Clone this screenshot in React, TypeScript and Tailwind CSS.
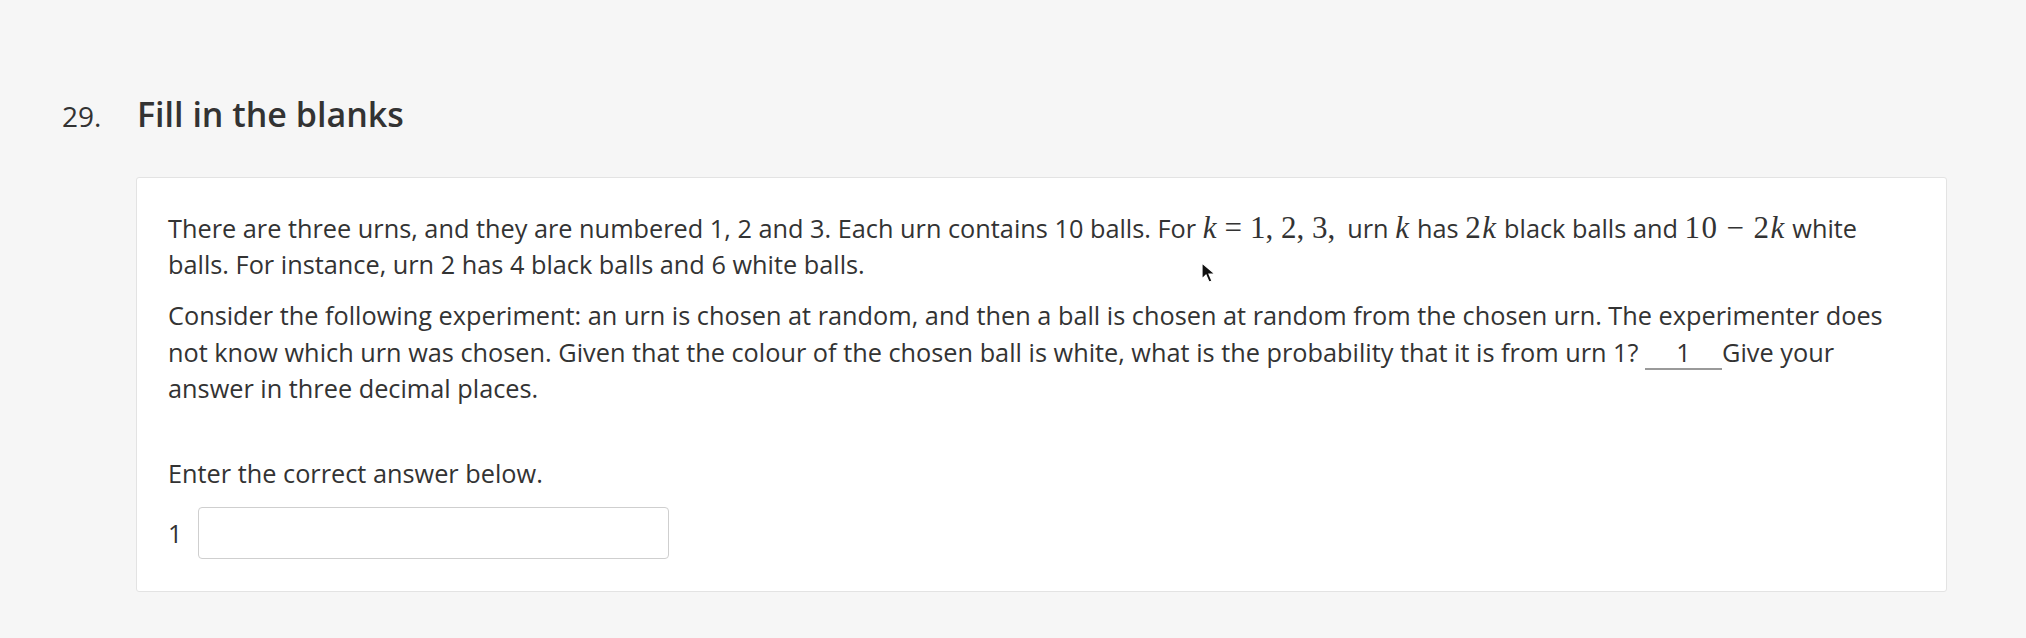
import React from 'react';

const sans = "font-['Open_Sans',_'Liberation_Sans',_sans-serif]";
const mathFont = "font-['Liberation_Serif',_'DejaVu_Serif',_serif] text-[31px] leading-none";

function M({ children, wide }: { children: React.ReactNode; wide?: boolean }) {
  return <span className={wide ? `${mathFont} tracking-[1.5px]` : mathFont}>{children}</span>;
}

function V({ children }: { children: React.ReactNode }) {
  return <i className="italic">{children}</i>;
}

export default function App() {
  return (
    <div className={`relative h-[638px] w-full overflow-hidden bg-[#f6f6f6] text-[#333] ${sans}`}>
      <div className="flex items-baseline pt-[94px] pl-[62px]">
        <span className="w-[75px] text-[28px] leading-[40px] text-[#333]">29.</span>
        <h2 className="text-[34px] leading-[40px] font-semibold text-[#333]">Fill in the blanks</h2>
      </div>

      <div className="mt-[41px] ml-[136px] w-[1811px] rounded-[3px] border border-[#e3e3e3] bg-white px-[31px] pt-[32px] pb-[32px]">
        <p className="text-[25.3px] leading-[36px]">
          There are three urns, and they are numbered 1, 2 and 3. Each urn contains 10 balls. For{' '}
          <M>
            <V>k</V>
            <span className="mx-[8px]">=</span>1, 2, 3,
          </M>
          <span className="ml-[12px]">urn</span> <M wide><V>k</V></M> has <M wide>2<V>k</V></M> black balls and{' '}
          <M wide>
            10<span className="mx-[8px]">−</span>2<V>k</V>
          </M>{' '}
          white balls. For instance, urn 2 has 4 black balls and 6 white balls.
        </p>
        <p className="mt-[15px] text-[25.3px] leading-[36.5px]">
          Consider the following experiment: an urn is chosen at random, and then a ball is chosen at random from
          the chosen urn. The experimenter does not know which urn was chosen. Given that the colour of the chosen
          ball is white, what is the probability that it is from urn 1?{' '}
          <span className="inline-block w-[77px] border-b-2 border-[#9a9a9a] text-center leading-[32px]">1</span>
          Give your answer in three decimal places.
        </p>

        <p className="mt-[48px] text-[25.3px] leading-[36px]">Enter the correct answer below.</p>
        <div className="mt-[16px] flex items-center gap-[14px]">
          <span className="w-[16px] text-[25px] leading-[36px]">1</span>
          <input
            type="text"
            className="h-[52px] w-[471px] rounded-[4px] border border-[#cfcfcf] bg-white px-3 text-[24px] outline-none"
          />
        </div>
      </div>

      {/* mouse pointer */}
      <svg className="absolute left-[1201px] top-[262px]" width="16" height="22" viewBox="0 0 16 22">
        <path d="M1 1 L1 17 L5 13 L8 20 L11 19 L8 12 L14 12 Z" fill="#111" stroke="#fff" strokeWidth="1.2" />
      </svg>
    </div>
  );
}
